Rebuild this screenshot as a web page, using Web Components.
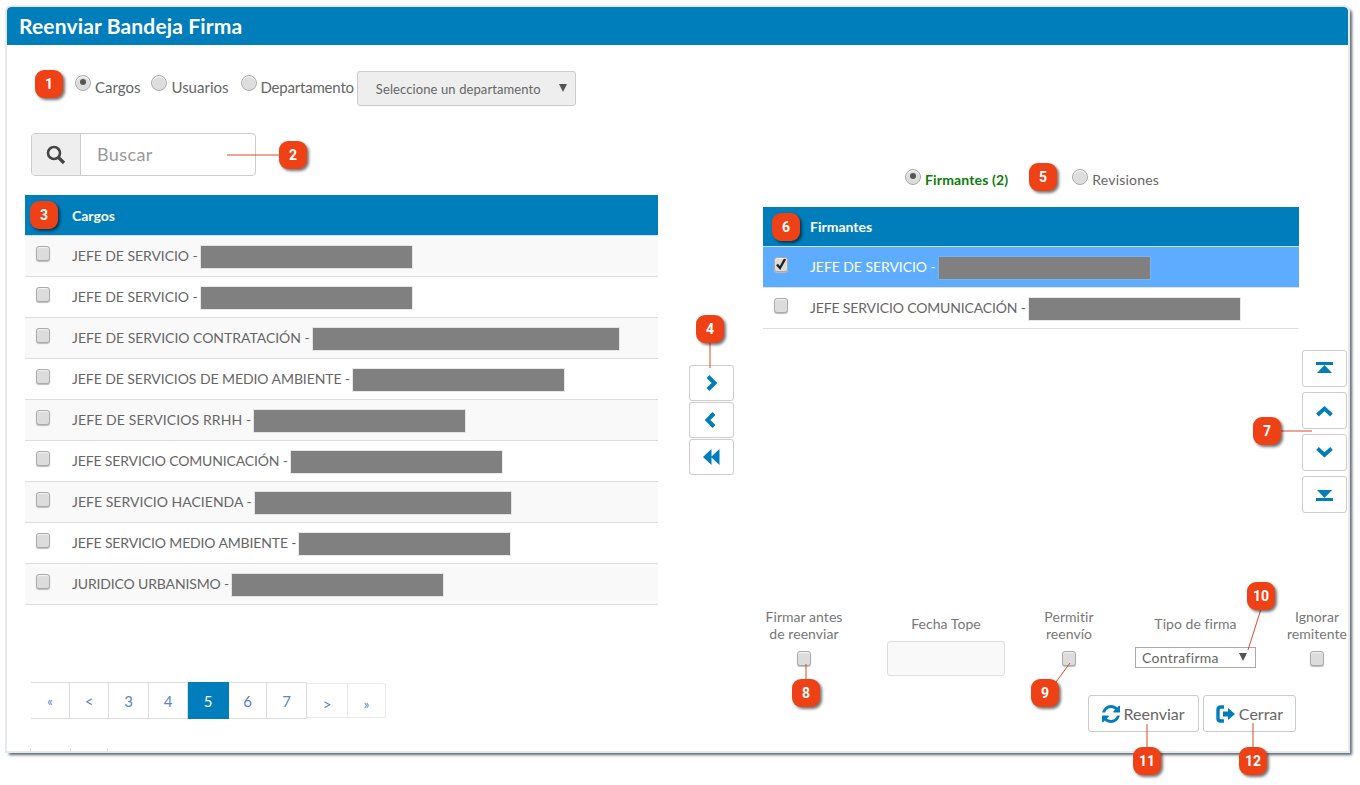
<!DOCTYPE html>
<html lang="es">
<head>
<meta charset="utf-8">
<title>Reenviar Bandeja Firma</title>
<style>
  html, body { margin: 0; background: #fff; }
  body { font-family: "Lato", "Liberation Sans", sans-serif; color: #666; width: 1360px; height: 785px; overflow: hidden; position: relative; }
</style>
</head>
<body>
<app-panel title="Reenviar Bandeja Firma">
  <div style="display:grid;grid-template-columns:633px 76px 614px;padding-left:18px">
    <left-col></left-col>
    <move-col style="margin-left:31px"></move-col>
    <right-col style="margin-left:29px"></right-col>
  </div>
</app-panel>
<lead-lines></lead-lines>
<call-out n="1" cx="49" cy="84"></call-out>
<call-out n="2" cx="293" cy="155"></call-out>
<call-out n="3" cx="44" cy="215"></call-out>
<call-out n="4" cx="710" cy="329"></call-out>
<call-out n="5" cx="1043" cy="177"></call-out>
<call-out n="6" cx="786" cy="227"></call-out>
<call-out n="7" cx="1267" cy="431"></call-out>
<call-out n="8" cx="806" cy="693"></call-out>
<call-out n="9" cx="1045" cy="693"></call-out>
<call-out n="10" cx="1261" cy="596"></call-out>
<call-out n="11" cx="1147" cy="761"></call-out>
<call-out n="12" cx="1253" cy="761"></call-out>

<script>
// iconos dibujados a mano
const ICONS = {
  right: '<path d="M5 1.500 11.500 8 5 14.500" fill="none" stroke="#007dbb" stroke-width="4"/>',
  left: '<path d="M11 1.500 4.500 8 11 14.500" fill="none" stroke="#007dbb" stroke-width="4"/>',
  back: '<path d="M8.500 0v16L0 8zM16.500 0v16L8 8z" fill="#007dbb"/>',
  first: '<path d="M0 2h17v3H0zM8.500 5 16 13H1z" fill="#007dbb" transform="translate(0 -1)"/>',
  up: '<path d="M1.500 12 8.500 5.500 15.500 12" fill="none" stroke="#007dbb" stroke-width="3.8"/>',
  down: '<path d="M1.500 3.500 8.500 10 15.500 3.500" fill="none" stroke="#007dbb" stroke-width="3.8"/>',
  last: '<path d="M1 3h15L8.500 11zM0 11h17v3H0z" fill="#007dbb"/>'
};

class AppPanel extends HTMLElement {
  connectedCallback() {
    this.attachShadow({ mode: 'open' });
    this.shadowRoot.innerHTML = `
      <style>
        :host { display: block; box-sizing: border-box; width: 1341px; height: 744px; margin: 7px 0 0 7px; background: #fff; border-radius: 4px 4px 0 0;
          box-shadow: 0 0 0 2px #e6eaee, 3px 3px 3px 1px rgba(40,50,60,.75); overflow: hidden; }
        header { height: 38px; background: #007dbb; border-radius: 4px 4px 0 0; color: #fff; font-size: 21px; font-weight: 700; line-height: 38px; padding-left: 12px; letter-spacing: .15px; }
      </style>
      <header>${this.getAttribute('title')}</header>
      <slot></slot>`;
    this.removeAttribute('title');
  }
}

class RadioOpt extends HTMLElement {
  connectedCallback() {
    this.attachShadow({ mode: 'open' });
    this.shadowRoot.innerHTML = `
      <style>
        :host { display: inline-flex; align-items: flex-start; gap: 4px; font-size: 15px; line-height: 18px; color: var(--radio-color, #666); flex: none; }
        i { display: block; box-sizing: border-box; width: 16px; height: 16px; border-radius: 50%; border: 1px solid #aaa; background: #ddd; box-shadow: inset 0 1px 1px #fff; position: relative; }
        i.on::after { content: ""; position: absolute; left: 4px; top: 3px; width: 6px; height: 6px; border-radius: 50%; background: #555; }
        span { margin-top: var(--txt-top, 3px); }
      </style>
      <i class="${this.hasAttribute('checked') ? 'on' : ''}"></i><span><slot></slot></span>`;
  }
}

class CheckBox extends HTMLElement {
  connectedCallback() {
    this.attachShadow({ mode: 'open' });
    const tick = this.hasAttribute('checked')
      ? '<svg width="14" height="14" viewBox="0 0 14 14"><path d="M3 7.500 6 11 11 2" fill="none" stroke="#222" stroke-width="2.4"/></svg>' : '';
    this.shadowRoot.innerHTML = `
      <style>
        :host { display: block; box-sizing: border-box; width: 14px; height: 15px; border: 1px solid #aaa; border-radius: 3px; background: #dcdcdc; box-shadow: inset 0 1px 1px #f4f4f4, 0 1px 1px #bbb; }
        svg { display: block; margin: -1px; }
      </style>${tick}`;
  }
}

class ListTable extends HTMLElement {
  connectedCallback() {
    this.attachShadow({ mode: 'open' });
    this.shadowRoot.innerHTML = `
      <style>
        :host { display: block; }
        .head { box-sizing: border-box; height: var(--head-h, 41px); background: #007dbb; color: #fff; font-size: 14px; font-weight: 700; line-height: var(--head-h, 41px); padding-left: 47px; border-bottom: 1px solid #cfe3ef; }
      </style>
      <div class="head">${this.getAttribute('title')}</div>
      <slot></slot>`;
    this.removeAttribute('title');
  }
}

class ListRow extends HTMLElement {
  connectedCallback() {
    this.attachShadow({ mode: 'open' });
    const w = this.getAttribute('w');
    const on = this.hasAttribute('selected');
    this.shadowRoot.innerHTML = `
      <style>
        :host { display: flex; box-sizing: border-box; height: 41px; align-items: center; border-bottom: 1px solid #ddd; font-size: 14px; color: #666; background: #fff; }
        :host(:nth-of-type(odd)) { background: var(--odd, #f9f9f9); }
        :host([selected]) { background: #5dacff; color: #fff; }
        check-box { margin: -5px 22px 0 11px; flex: none; }
        span { margin-top: -2px; }
        b { display: block; height: 22px; background: #808080; margin: 2px 0 0 3px; box-shadow: 0 0 0 1px rgba(190,190,190,.35); flex: none; }
      </style>
      <check-box ${on ? 'checked' : ''}></check-box><span><slot></slot></span><b style="width:${w}px"></b>`;
  }
}

class IconBtn extends HTMLElement {
  connectedCallback() {
    this.attachShadow({ mode: 'open' });
    this.shadowRoot.innerHTML = `
      <style>
        :host { display: flex; box-sizing: border-box; width: 45px; height: var(--btn-h, 37px); align-items: center; justify-content: center; border: 1px solid #ccc; border-radius: 3px; background: #fff; }
        svg { display: block; }
      </style>
      <svg width="17" height="16" viewBox="0 0 17 16">${ICONS[this.getAttribute('icon')]}</svg>`;
  }
}

class PageNav extends HTMLElement {
  connectedCallback() {
    this.attachShadow({ mode: 'open' });
    const items = [['«', 39, 'sm'], ['<', 39], ['3', 40], ['4', 39], ['5', 41, 'on'], ['6', 38], ['7', 40], ['>', 41, 'off'], ['»', 38, 'off sm']];
    this.shadowRoot.innerHTML = `
      <style>
        :host { display: flex; height: 37px; margin-left: 6px; font-size: 15px; color: #5b84c0; align-items: flex-start; }
        a { display: block; box-sizing: border-box; height: 37px; line-height: 37px; text-align: center; border: 1px solid #ddd; border-left-width: 0; background: #fff; }
        a:first-child { border-left-width: 1px; border-radius: 4px 0 0 4px; }
        a.sm { font-size: 13px; }
        a.on { background: #007dbb; color: #fff; border-color: #007dbb; }
        a.off { height: 35px; margin-top: 1px; line-height: 40px; border-color: #eaeaea; }
        a:last-child { border-radius: 0 3px 3px 0; }
      </style>
      ${items.map(([t, w, c]) => `<a class="${c || ''}" style="width:${w}px">${t.replace('<', '&lt;').replace('>', '&gt;')}</a>`).join('')}`;
  }
}

class SelectBox extends HTMLElement {
  connectedCallback() {
    this.attachShadow({ mode: 'open' });
    this.shadowRoot.innerHTML = `
      <style>
        :host { display: flex; box-sizing: border-box; position: relative; align-items: center; color: #666; border: 1px solid #ccc; white-space: nowrap; }
        :host::after { content: ""; position: absolute; right: 8px; top: 50%; margin-top: -5px; border: 4px solid transparent; border-top: 8px solid #555; border-bottom: 0; }
      </style>
      <slot></slot>`;
  }
}

class FormField extends HTMLElement {
  connectedCallback() {
    this.attachShadow({ mode: 'open' });
    this.shadowRoot.innerHTML = `
      <style>
        :host { display: flex; flex-direction: column; align-items: center; text-align: center; font-size: 14px; line-height: 17px; color: #777; flex: none; letter-spacing: .05px; }
        .lbl { white-space: nowrap; }
      </style>
      <div class="lbl"><slot name="label"></slot></div>
      <slot></slot>`;
  }
}

class ActionBtn extends HTMLElement {
  connectedCallback() {
    this.attachShadow({ mode: 'open' });
    this.shadowRoot.innerHTML = `
      <style>
        :host { display: inline-flex; box-sizing: border-box; height: 37px; align-items: center; justify-content: center; gap: 3px; border: 1px solid #ccc; border-radius: 3px; font-size: 16px; color: #666; background: #fff; }
        ::slotted(svg) { display: block; }
      </style>
      <slot></slot>`;
  }
}

class LeftCol extends HTMLElement {
  connectedCallback() {
    this.attachShadow({ mode: 'open' });
    this.shadowRoot.innerHTML = `
      <style>
        :host { display: block; padding-top: 26px; --odd: #f9f9f9; }
        .bar { display: flex; height: 35px; align-items: flex-start; margin-left: 50px; box-sizing: border-box; padding-top: 4px; }
        radio-opt:nth-child(1) { margin-right: 11px; }
        radio-opt:nth-child(2) { margin-right: 12px; }
        radio-opt:nth-child(3) { margin-right: 3px; letter-spacing: -.2px; }
        select-box { width: 219px; height: 35px; margin-top: -4px; background: #eee; border-radius: 3px; padding-left: 18px; font-size: 13px; letter-spacing: .1px; }
        .search { display: flex; box-sizing: border-box; width: 225px; height: 43px; margin: 27px 0 19px 6px; border: 1px solid #ccc; border-radius: 4px; }
        .addon { width: 49px; box-sizing: border-box; background: #eee; border-right: 1px solid #ccc; display: flex; align-items: center; justify-content: center; border-radius: 3px 0 0 3px; }
        .input { padding-left: 16px; font-size: 18px; line-height: 41px; color: #999; letter-spacing: .4px; }
        page-nav { margin-top: 77px; }
        .ticks { display: flex; height: 3px; margin: 29px 0 0 5px; }
        .ticks i { box-sizing: border-box; border-left: 1px solid #ddd; width: 40px; }
        .ticks i:nth-child(2) { width: 37px; }
      </style>
      <div class="bar">
        <radio-opt checked>Cargos</radio-opt>
        <radio-opt>Usuarios</radio-opt>
        <radio-opt>Departamento</radio-opt>
        <select-box>Seleccione un departamento</select-box>
      </div>
      <div class="search">
        <div class="addon"><svg width="20" height="20" viewBox="0 0 20 20"><circle cx="8" cy="8" r="6" fill="none" stroke="#444" stroke-width="2.6"/><path d="M12.500 12.500 18 18" stroke="#444" stroke-width="3.2"/></svg></div>
        <div class="input">Buscar</div>
      </div>
      <list-table title="Cargos">
        <list-row w="211" style="letter-spacing:-.06px">JEFE DE SERVICIO -</list-row>
        <list-row w="211" style="letter-spacing:-.06px">JEFE DE SERVICIO -</list-row>
        <list-row w="306" style="letter-spacing:-.03px">JEFE DE SERVICIO CONTRATACIÓN -</list-row>
        <list-row w="211" style="letter-spacing:-.07px">JEFE DE SERVICIOS DE MEDIO AMBIENTE -</list-row>
        <list-row w="211" style="letter-spacing:.1px">JEFE DE SERVICIOS RRHH -</list-row>
        <list-row w="211" style="letter-spacing:-.15px">JEFE SERVICIO COMUNICACIÓN -</list-row>
        <list-row w="256" style="letter-spacing:.02px">JEFE SERVICIO HACIENDA -</list-row>
        <list-row w="211" style="letter-spacing:-.14px">JEFE SERVICIO MEDIO AMBIENTE -</list-row>
        <list-row w="211" style="letter-spacing:-.15px">JURIDICO URBANISMO -</list-row>
      </list-table>
      <page-nav></page-nav>
      <div class="ticks"><i></i><i></i><i></i></div>`;
  }
}

class MoveCol extends HTMLElement {
  connectedCallback() {
    this.attachShadow({ mode: 'open' });
    this.shadowRoot.innerHTML = `
      <style>:host { display: flex; flex-direction: column; gap: 1px; padding-top: 320px; --btn-h: 36px; }</style>
      <icon-btn icon="right"></icon-btn>
      <icon-btn icon="left"></icon-btn>
      <icon-btn icon="back"></icon-btn>`;
  }
}

class RightCol extends HTMLElement {
  connectedCallback() {
    this.attachShadow({ mode: 'open' });
    this.shadowRoot.innerHTML = `
      <style>
        :host { display: block; padding-top: 124px; --odd: #fff; --head-h: 40px; }
        .tabs { display: flex; height: 38px; align-items: flex-start; padding-left: 142px; box-sizing: border-box; --txt-top: 2px; }
        .tabs radio-opt { font-size: 14px; letter-spacing: .2px; }
        .tabs radio-opt:first-child { --radio-color: #0a7d0a; font-weight: 700; letter-spacing: .15px; margin-right: 64px; }
        list-table { width: 536px; }
        .side { display: flex; flex-direction: column; gap: 5px; width: 45px; margin: 21px 0 0 539px; }
        .form { display: flex; margin-top: 95px; height: 68px; align-items: flex-start; }
        .form input-box { display: block; box-sizing: border-box; width: 118px; height: 35px; margin-top: 9px; background: #f9f9f9; border: 1px solid #ddd; border-radius: 3px; }
        .form check-box { margin-top: 9px; }
        select-box { width: 121px; height: 21px; margin-top: 15px; padding-left: 6px; background: #fff; border-color: #aaa; font-size: 14px; letter-spacing: .3px; }
        .actions { display: flex; justify-content: flex-end; gap: 4px; margin: 19px 52px 0 0; }
      </style>
      <div class="tabs">
        <radio-opt checked>Firmantes (2)</radio-opt>
        <radio-opt>Revisiones</radio-opt>
      </div>
      <list-table title="Firmantes">
        <list-row w="211" selected style="letter-spacing:-.06px">JEFE DE SERVICIO -</list-row>
        <list-row w="211" style="letter-spacing:-.15px">JEFE SERVICIO COMUNICACIÓN -</list-row>
      </list-table>
      <div class="side">
        <icon-btn icon="first"></icon-btn>
        <icon-btn icon="up"></icon-btn>
        <icon-btn icon="down"></icon-btn>
        <icon-btn icon="last"></icon-btn>
      </div>
      <div class="form">
        <form-field style="width:82px"><span slot="label">Firmar antes<br>de reenviar</span><check-box></check-box></form-field>
        <form-field style="width:118px;margin-left:42px;padding-top:7px"><span slot="label">Fecha Tope</span><input-box></input-box></form-field>
        <form-field style="width:80px;margin-left:24px"><span slot="label">Permitir<br>reenvío</span><check-box></check-box></form-field>
        <form-field style="width:121px;margin-left:26px;padding-top:7px"><span slot="label">Tipo de firma</span><select-box>Contrafirma</select-box></form-field>
        <form-field style="width:62px;margin-left:30px"><span slot="label">Ignorar<br>remitente</span><check-box></check-box></form-field>
      </div>
      <div class="actions">
        <action-btn style="width:111px">
          <svg width="18" height="18" viewBox="0 0 1536 1536"><path fill="#007dbb" d="M1511 928q0 5-1 7-64 268-268 434.5t-478 166.5q-146 0-282.5-55t-243.5-157l-129 129q-19 19-45 19t-45-19-19-45v-448q0-26 19-45t45-19h448q26 0 45 19t19 45-19 45l-137 137q71 66 161 102t187 36q134 0 250-65t186-179q11-17 53-117 8-23 30-23h192q13 0 22.5 9.5t9.5 22.5zm25-800v448q0 26-19 45t-45 19h-448q-26 0-45-19t-19-45 19-45l138-138q-148-137-349-137-134 0-250 65t-186 179q-11 17-53 117-8 23-30 23h-199q-13 0-22.5-9.5t-9.5-22.5v-7q65-268 270-434.5t480-166.5q146 0 284 55.5t245 156.5l130-129q19-19 45-19t45 19 19 45z"/></svg>
          Reenviar
        </action-btn>
        <action-btn style="width:93px">
          <svg width="20" height="18" viewBox="0 0 20 18"><path d="M8 2H4.500Q2 2 2 4.500V13.500Q2 16 4.500 16H8" fill="none" stroke="#007dbb" stroke-width="3.4"/><path d="M7 6.500h5V3l7 6-7 6v-3.500H7z" fill="#007dbb"/></svg>
          Cerrar
        </action-btn>
      </div>`;
  }
}

class CallOut extends HTMLElement {
  connectedCallback() {
    this.attachShadow({ mode: 'open' });
    this.style.left = (this.getAttribute('cx') - 14) + 'px';
    this.style.top = (this.getAttribute('cy') - 14) + 'px';
    this.shadowRoot.innerHTML = `
      <style>
        :host { position: absolute; display: flex; width: 28px; height: 28px; align-items: center; justify-content: center; border-radius: 9px; background: #ef4116; color: #fff; font: 700 14px "Roboto", "Liberation Sans", sans-serif; box-shadow: 2px 2px 3px rgba(0,0,0,.55); }
      </style>${this.getAttribute('n')}`;
  }
}

class LeadLines extends HTMLElement {
  connectedCallback() {
    this.attachShadow({ mode: 'open' });
    const lines = [[227, 155, 280, 155], [710, 342, 710, 368], [1280, 431, 1312, 431], [806, 664, 806, 680], [1070, 663, 1056, 682], [1261, 609, 1248, 650], [1147, 724, 1147, 748], [1253, 723, 1253, 748]];
    this.shadowRoot.innerHTML = `
      <style>:host { position: absolute; left: 0; top: 0; } svg { display: block; }</style>
      <svg width="1360" height="785">${lines.map(l => `<line x1="${l[0]}" y1="${l[1]}" x2="${l[2]}" y2="${l[3]}" stroke="#e0482a" stroke-width="1"/>`).join('')}</svg>`;
  }
}

customElements.define('input-box', class extends HTMLElement {});
customElements.define('app-panel', AppPanel);
customElements.define('radio-opt', RadioOpt);
customElements.define('check-box', CheckBox);
customElements.define('list-table', ListTable);
customElements.define('list-row', ListRow);
customElements.define('icon-btn', IconBtn);
customElements.define('page-nav', PageNav);
customElements.define('select-box', SelectBox);
customElements.define('form-field', FormField);
customElements.define('action-btn', ActionBtn);
customElements.define('left-col', LeftCol);
customElements.define('move-col', MoveCol);
customElements.define('right-col', RightCol);
customElements.define('call-out', CallOut);
customElements.define('lead-lines', LeadLines);
</script>
</body>
</html>
